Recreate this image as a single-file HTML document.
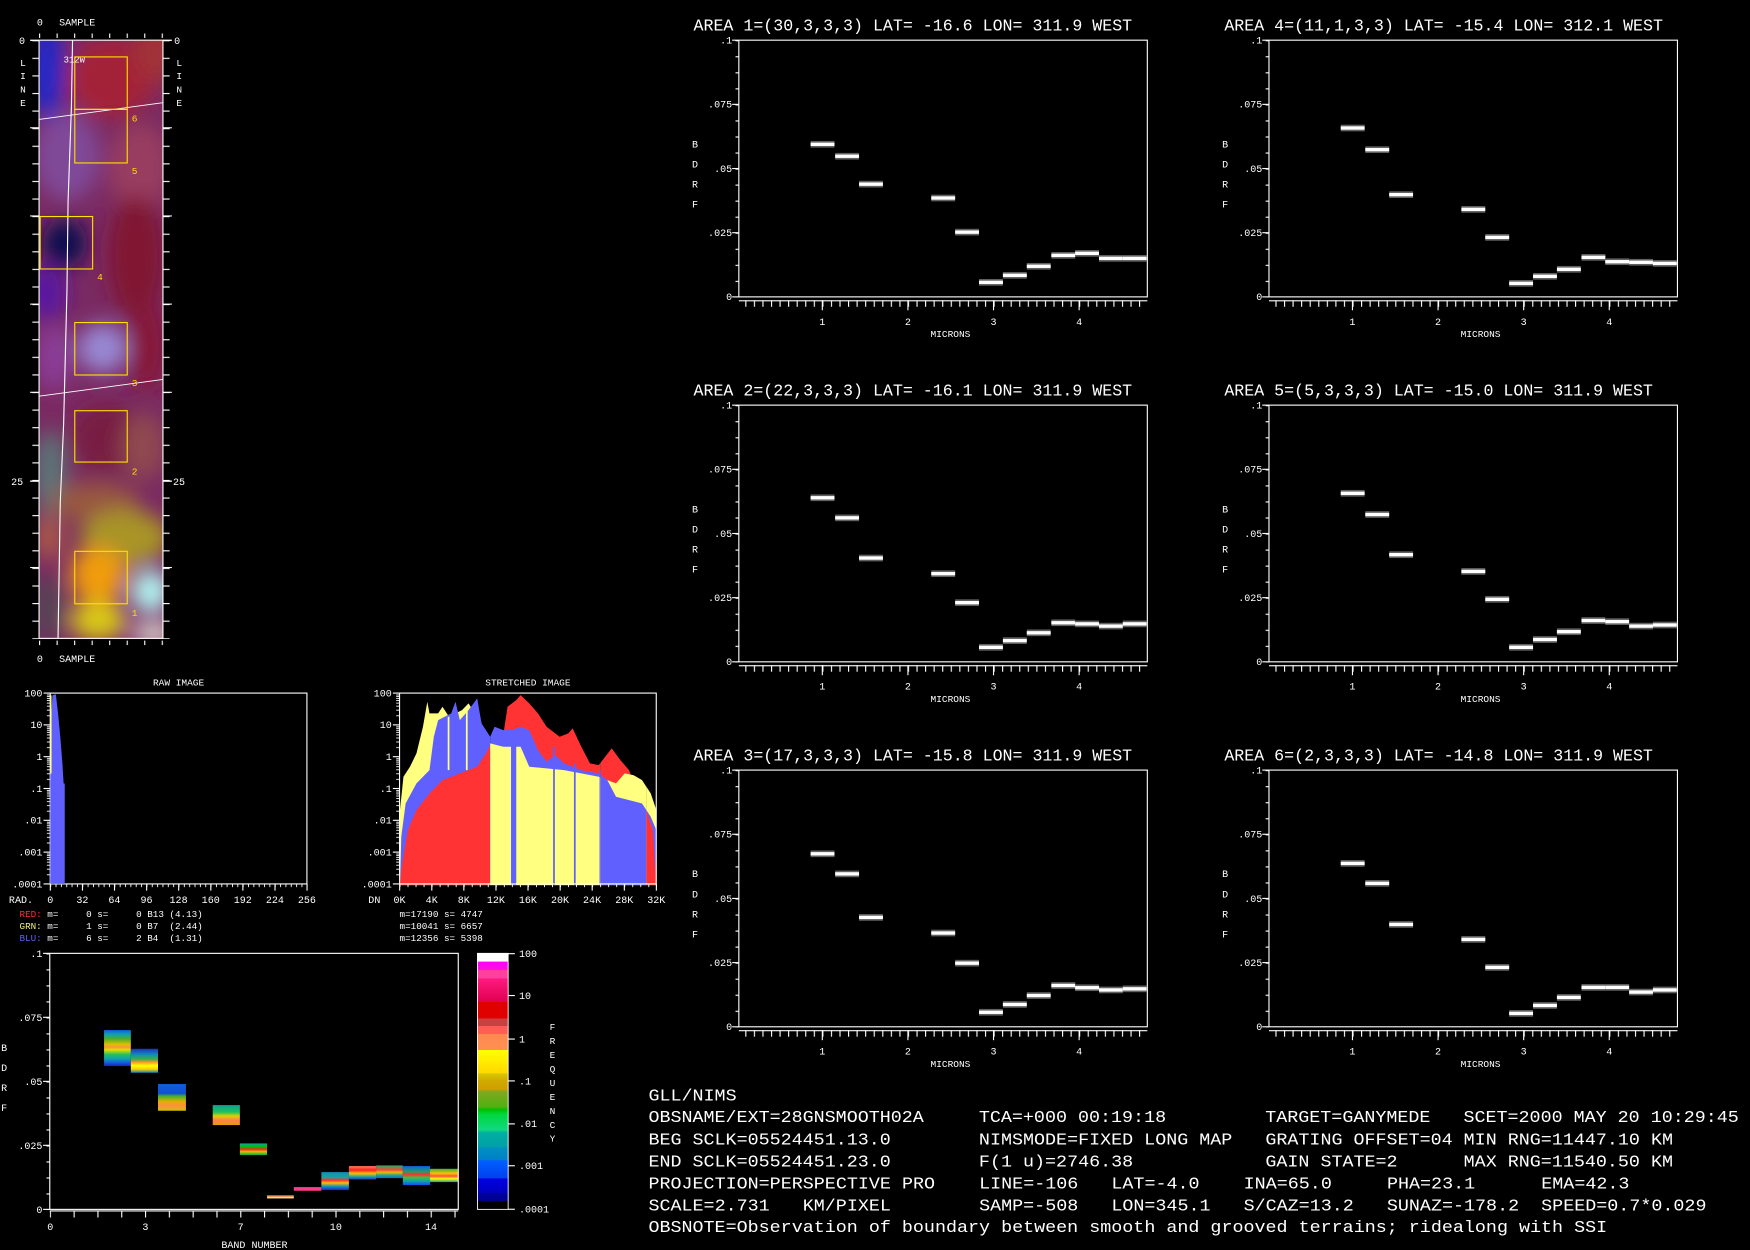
<!DOCTYPE html>
<html><head><meta charset="utf-8">
<style>
html,body{margin:0;padding:0;background:#000;}
svg{display:block;}
text{font-family:"Liberation Mono","DejaVu Sans Mono",monospace;fill:#fff;white-space:pre;}
</style></head>
<body>
<svg xmlns="http://www.w3.org/2000/svg" xmlns:xlink="http://www.w3.org/1999/xlink" width="1750" height="1250" viewBox="0 0 1568 1120">
<defs>
  <filter id="blur" x="-50%" y="-50%" width="200%" height="200%"><feGaussianBlur stdDeviation="9"/></filter>
  <clipPath id="stripClip"><rect x="35" y="36" width="111" height="536"/></clipPath>
  <pattern id="pyt" patternUnits="userSpaceOnUse" x="0" y="0" width="3" height="14.375"><rect x="0" y="0" width="3" height="1" fill="#fff"/></pattern>
  <pattern id="pxt" patternUnits="userSpaceOnUse" x="5.77" y="233" width="7.67" height="8"><rect x="0" y="0" width="1" height="6" fill="#fff"/></pattern>
  <pattern id="pyt2" patternUnits="userSpaceOnUse" x="0" y="854.2" width="3" height="14.34"><rect x="0" y="0" width="3" height="1" fill="#fff"/></pattern>
  <pattern id="pxt2" patternUnits="userSpaceOnUse" x="44.6" y="1085" width="21.33" height="8"><rect x="0" y="0" width="1" height="6" fill="#fff"/></pattern>
  <pattern id="plog" patternUnits="userSpaceOnUse" x="0" y="621" width="3" height="28.5">
    <rect x="0" y="1.3" width="3" height="0.8" fill="#fff"/><rect x="0" y="2.76" width="3" height="0.8" fill="#fff"/>
    <rect x="0" y="4.42" width="3" height="0.8" fill="#fff"/><rect x="0" y="6.32" width="3" height="0.8" fill="#fff"/>
    <rect x="0" y="8.58" width="3" height="0.8" fill="#fff"/><rect x="0" y="11.34" width="3" height="0.8" fill="#fff"/>
    <rect x="0" y="14.9" width="3" height="0.8" fill="#fff"/><rect x="0" y="19.92" width="3" height="0.8" fill="#fff"/>
  </pattern>
  <pattern id="prx" patternUnits="userSpaceOnUse" x="45" y="792" width="4.79" height="6"><rect x="0" y="0" width="0.8" height="3" fill="#fff"/></pattern>
  <pattern id="psx" patternUnits="userSpaceOnUse" x="358" y="792" width="7.19" height="6"><rect x="0" y="0" width="0.8" height="3" fill="#fff"/></pattern>
  <pattern id="pstl" patternUnits="userSpaceOnUse" x="0" y="36" width="8" height="15.76"><rect x="0" y="0" width="8" height="1" fill="#fff"/></pattern>
  <pattern id="pstt" patternUnits="userSpaceOnUse" x="35" y="0" width="15.7" height="8"><rect x="0" y="0" width="1" height="8" fill="#fff"/></pattern>

  <linearGradient id="cbar" x1="0" y1="0" x2="0" y2="1">
    <stop offset="0" stop-color="#fff"/><stop offset="0.032" stop-color="#fff"/>
    <stop offset="0.033" stop-color="#ff00ff"/><stop offset="0.065" stop-color="#ff10e0"/>
    <stop offset="0.066" stop-color="#ff40a0"/><stop offset="0.097" stop-color="#ff40a0"/>
    <stop offset="0.098" stop-color="#ff1a80"/><stop offset="0.19" stop-color="#e00050"/>
    <stop offset="0.191" stop-color="#e00000"/><stop offset="0.254" stop-color="#e00000"/>
    <stop offset="0.255" stop-color="#c84040"/><stop offset="0.283" stop-color="#c84040"/>
    <stop offset="0.284" stop-color="#ff5858"/><stop offset="0.315" stop-color="#ff6050"/>
    <stop offset="0.316" stop-color="#ff8850"/><stop offset="0.377" stop-color="#ff9050"/>
    <stop offset="0.378" stop-color="#ffff00"/><stop offset="0.468" stop-color="#ffd800"/>
    <stop offset="0.469" stop-color="#d8c800"/><stop offset="0.5" stop-color="#d0a800"/>
    <stop offset="0.53" stop-color="#d0a000"/><stop offset="0.54" stop-color="#80a820"/>
    <stop offset="0.6" stop-color="#50b010"/><stop offset="0.61" stop-color="#00c000"/>
    <stop offset="0.63" stop-color="#00d840"/><stop offset="0.69" stop-color="#10d880"/>
    <stop offset="0.7" stop-color="#00b0a0"/><stop offset="0.755" stop-color="#00a0a8"/>
    <stop offset="0.76" stop-color="#0090c0"/><stop offset="0.807" stop-color="#0080c8"/>
    <stop offset="0.81" stop-color="#0060ff"/><stop offset="0.878" stop-color="#0040f0"/>
    <stop offset="0.88" stop-color="#0000e0"/><stop offset="0.935" stop-color="#0000c0"/>
    <stop offset="0.937" stop-color="#0000a0"/><stop offset="0.966" stop-color="#000090"/>
    <stop offset="0.968" stop-color="#000"/><stop offset="1" stop-color="#000"/>
  </linearGradient>
  <linearGradient id="gb1" x1="0" y1="0" x2="0" y2="1">
    <stop offset="0" stop-color="#1060e0"/><stop offset="0.12" stop-color="#10a0b0"/><stop offset="0.25" stop-color="#50b020"/>
    <stop offset="0.4" stop-color="#e0c000"/><stop offset="0.47" stop-color="#ff9040"/><stop offset="0.55" stop-color="#e0e000"/>
    <stop offset="0.68" stop-color="#20c060"/><stop offset="0.8" stop-color="#10a0b0"/><stop offset="0.9" stop-color="#1060e0"/><stop offset="1" stop-color="#2020c0"/>
  </linearGradient>
  <linearGradient id="gb2" x1="0" y1="0" x2="0" y2="1">
    <stop offset="0" stop-color="#2030c0"/><stop offset="0.25" stop-color="#1090b0"/><stop offset="0.45" stop-color="#40b040"/>
    <stop offset="0.55" stop-color="#ff9030"/><stop offset="0.7" stop-color="#ffff00"/><stop offset="0.85" stop-color="#ffd000"/><stop offset="1" stop-color="#1080c0"/>
  </linearGradient>
  <linearGradient id="gb3" x1="0" y1="0" x2="0" y2="1">
    <stop offset="0" stop-color="#1060e0"/><stop offset="0.35" stop-color="#1050d0"/><stop offset="0.45" stop-color="#40b030"/>
    <stop offset="0.65" stop-color="#e0b000"/><stop offset="0.8" stop-color="#ff9040"/><stop offset="1" stop-color="#d0c000"/>
  </linearGradient>
  <linearGradient id="gb4" x1="0" y1="0" x2="0" y2="1">
    <stop offset="0" stop-color="#10a090"/><stop offset="0.35" stop-color="#20c060"/><stop offset="0.55" stop-color="#e0d000"/>
    <stop offset="0.75" stop-color="#ff8050"/><stop offset="1" stop-color="#e0a000"/>
  </linearGradient>
  <linearGradient id="gb5" x1="0" y1="0" x2="0" y2="1">
    <stop offset="0" stop-color="#10a0a0"/><stop offset="0.3" stop-color="#00c000"/><stop offset="0.5" stop-color="#ff2020"/>
    <stop offset="0.7" stop-color="#e0c000"/><stop offset="1" stop-color="#00b040"/>
  </linearGradient>
  <linearGradient id="gb8" x1="0" y1="0" x2="0" y2="1">
    <stop offset="0" stop-color="#1090b0"/><stop offset="0.3" stop-color="#20a0a0"/><stop offset="0.45" stop-color="#ff3030"/>
    <stop offset="0.6" stop-color="#ffc000"/><stop offset="0.8" stop-color="#1090c0"/><stop offset="1" stop-color="#2020d0"/>
  </linearGradient>
  <linearGradient id="gb9" x1="0" y1="0" x2="0" y2="1">
    <stop offset="0" stop-color="#ff8060"/><stop offset="0.3" stop-color="#ff2020"/><stop offset="0.55" stop-color="#ffc000"/>
    <stop offset="0.8" stop-color="#20a0a0"/><stop offset="1" stop-color="#2040d0"/>
  </linearGradient>
  <linearGradient id="gb10" x1="0" y1="0" x2="0" y2="1">
    <stop offset="0" stop-color="#20b060"/><stop offset="0.35" stop-color="#ff4040"/><stop offset="0.55" stop-color="#e0c000"/>
    <stop offset="0.8" stop-color="#10a0a0"/><stop offset="1" stop-color="#1070d0"/>
  </linearGradient>
  <linearGradient id="gb11" x1="0" y1="0" x2="0" y2="1">
    <stop offset="0" stop-color="#1060f0"/><stop offset="0.3" stop-color="#20a060"/><stop offset="0.45" stop-color="#ff3030"/>
    <stop offset="0.6" stop-color="#40c040"/><stop offset="0.8" stop-color="#10a0b0"/><stop offset="1" stop-color="#1050f0"/>
  </linearGradient>
  <linearGradient id="gb12" x1="0" y1="0" x2="0" y2="1">
    <stop offset="0" stop-color="#40b040"/><stop offset="0.35" stop-color="#ffc000"/><stop offset="0.55" stop-color="#ff5040"/>
    <stop offset="0.75" stop-color="#ffff00"/><stop offset="1" stop-color="#10a0b0"/>
  </linearGradient>

  <g id="axes">
    <rect x="0" y="0" width="366" height="230" fill="none" stroke="#fff" stroke-width="1"/>
    <rect x="-3" y="-0.5" width="3" height="231" fill="url(#pyt)"/>
    <rect x="-6" y="-0.5" width="6" height="1" fill="#fff"/>
    <rect x="-6" y="57" width="6" height="1" fill="#fff"/>
    <rect x="-6" y="114.5" width="6" height="1" fill="#fff"/>
    <rect x="-6" y="172" width="6" height="1" fill="#fff"/>
    <rect x="-6" y="229.5" width="6" height="1" fill="#fff"/>
    <rect x="0" y="233" width="366" height="1" fill="#fff"/>
    <rect x="5" y="233" width="361" height="6" fill="url(#pxt)"/>
    <rect x="74.3" y="233" width="1" height="9" fill="#fff"/>
    <rect x="151" y="233" width="1" height="9" fill="#fff"/>
    <rect x="227.7" y="233" width="1" height="9" fill="#fff"/>
    <rect x="304.4" y="233" width="1" height="9" fill="#fff"/>
    <text x="-6" y="3" font-size="9" text-anchor="end">.1</text>
    <text x="-6" y="60.5" font-size="9" text-anchor="end">.075</text>
    <text x="-6" y="118" font-size="9" text-anchor="end">.05</text>
    <text x="-6" y="175.5" font-size="9" text-anchor="end">.025</text>
    <text x="-6" y="233" font-size="9" text-anchor="end">0</text>
    <text x="-42" y="96" font-size="9">B</text>
    <text x="-42" y="114" font-size="9">D</text>
    <text x="-42" y="132" font-size="9">R</text>
    <text x="-42" y="150" font-size="9">F</text>
    <text x="74.8" y="255" font-size="9" text-anchor="middle">1</text>
    <text x="151.5" y="255" font-size="9" text-anchor="middle">2</text>
    <text x="228.2" y="255" font-size="9" text-anchor="middle">3</text>
    <text x="304.9" y="255" font-size="9" text-anchor="middle">4</text>
    <text x="189.6" y="266" font-size="8.5" text-anchor="middle">MICRONS</text>
  </g>
  <g id="b"><rect x="0" y="-3" width="21.4" height="6" fill="#606060"/><rect x="0" y="-1.5" width="21.4" height="3" fill="#fff"/></g>
</defs>

<rect width="1568" height="1120" fill="#000"/>

<!-- STRIP IMAGE -->
<g clip-path="url(#stripClip)">
  <rect x="35" y="36" width="111" height="536" fill="#7a2a62"/>
  <g filter="url(#blur)">
    <ellipse cx="42" cy="62" rx="16" ry="45" fill="#2228c8"/>
    <ellipse cx="100" cy="70" rx="40" ry="35" fill="#a42038"/>
    <ellipse cx="140" cy="45" rx="20" ry="30" fill="#a03038"/>
    <ellipse cx="60" cy="140" rx="30" ry="40" fill="#804898"/>
    <ellipse cx="125" cy="150" rx="28" ry="40" fill="#983e60"/>
    <ellipse cx="58" cy="218" rx="20" ry="22" fill="#0a0a50"/>
    <ellipse cx="42" cy="262" rx="18" ry="25" fill="#5a12a0"/>
    <ellipse cx="122" cy="230" rx="25" ry="55" fill="#801430"/>
    <ellipse cx="92" cy="312" rx="22" ry="22" fill="#9888d4"/>
    <ellipse cx="48" cy="320" rx="16" ry="30" fill="#8a3e98"/>
    <ellipse cx="132" cy="310" rx="16" ry="40" fill="#861238"/>
    <ellipse cx="95" cy="392" rx="30" ry="30" fill="#781c42"/>
    <ellipse cx="45" cy="425" rx="14" ry="40" fill="#5a7878"/>
    <ellipse cx="128" cy="400" rx="20" ry="30" fill="#904850"/>
    <ellipse cx="85" cy="450" rx="40" ry="18" fill="#985840"/>
    <ellipse cx="112" cy="482" rx="40" ry="25" fill="#a89428"/>
    <ellipse cx="44" cy="482" rx="14" ry="20" fill="#a85848"/>
    <ellipse cx="88" cy="515" rx="25" ry="25" fill="#f09c10"/>
    <ellipse cx="44" cy="545" rx="14" ry="30" fill="#544454"/>
    <ellipse cx="88" cy="556" rx="25" ry="18" fill="#d8c818"/>
    <ellipse cx="135" cy="530" rx="18" ry="20" fill="#b0f0ec"/>
    <ellipse cx="138" cy="568" rx="20" ry="10" fill="#dcdcd0"/>
  </g>
  <polyline points="65,36 64,95 61,180 60,260 57,380 54,450 52,572" fill="none" stroke="#fff" stroke-width="1"/>
  <line x1="35" y1="107" x2="146" y2="92" stroke="#fff" stroke-width="0.8"/>
  <line x1="35" y1="355" x2="146" y2="340" stroke="#fff" stroke-width="0.8"/>
</g>
<rect x="35" y="36" width="111" height="536" fill="none" stroke="#fff" stroke-width="1"/>
<text x="57" y="56" font-size="8">312W</text>
<g fill="none" stroke="#ffe000" stroke-width="1">
  <rect x="67" y="51" width="47" height="47"/>
  <rect x="67" y="98" width="47" height="48"/>
  <rect x="36" y="194" width="47" height="47"/>
  <rect x="67" y="289" width="47" height="47"/>
  <rect x="67" y="368" width="47" height="46"/>
  <rect x="67" y="494" width="47" height="47"/>
</g>
<g font-size="8.5">
  <text x="118" y="109" style="fill:#ffe000">6</text>
  <text x="118" y="156" style="fill:#ffe000">5</text>
  <text x="87" y="251" style="fill:#ffe000">4</text>
  <text x="118" y="346" style="fill:#ffe000">3</text>
  <text x="118" y="425" style="fill:#ffe000">2</text>
  <text x="118" y="552" style="fill:#ffe000">1</text>
</g>
<rect x="29" y="35.5" width="6" height="537" fill="url(#pstl)"/>
<rect x="146" y="35.5" width="6" height="537" fill="url(#pstl)"/>
<rect x="34.5" y="30" width="112" height="4" fill="url(#pstt)"/>
<rect x="34.5" y="574" width="112" height="4" fill="url(#pstt)"/>
<rect x="27" y="114" width="8" height="1" fill="#fff"/><rect x="27" y="193" width="8" height="1" fill="#fff"/>
<rect x="27" y="272" width="8" height="1" fill="#fff"/><rect x="27" y="351" width="8" height="1" fill="#fff"/>
<rect x="27" y="508" width="8" height="1" fill="#fff"/>
<rect x="146" y="114" width="8" height="1" fill="#fff"/><rect x="146" y="193" width="8" height="1" fill="#fff"/>
<rect x="146" y="272" width="8" height="1" fill="#fff"/><rect x="146" y="351" width="8" height="1" fill="#fff"/>
<rect x="146" y="508" width="8" height="1" fill="#fff"/>
<rect x="27" y="35.5" width="8" height="1.2" fill="#fff"/><rect x="146" y="35.5" width="8" height="1.2" fill="#fff"/>
<rect x="27" y="430.5" width="8" height="1.2" fill="#fff"/><rect x="146" y="430.5" width="8" height="1.2" fill="#fff"/>
<text x="17" y="39.5" font-size="9">0</text>
<text x="156" y="39.5" font-size="9">0</text>
<text x="10" y="434.5" font-size="9">25</text>
<text x="155" y="434.5" font-size="9">25</text>
<g font-size="8.5"><text x="18" y="59">L</text><text x="18" y="71">I</text><text x="18" y="83">N</text><text x="18" y="95">E</text>
<text x="158" y="59">L</text><text x="158" y="71">I</text><text x="158" y="83">N</text><text x="158" y="95">E</text></g>
<text x="33" y="23" font-size="9">0</text><text x="53" y="23" font-size="9">SAMPLE</text>
<text x="33" y="593" font-size="9">0</text><text x="53" y="593" font-size="9">SAMPLE</text>

<!-- RAW HISTOGRAM -->
<text x="160" y="614" font-size="8.5" text-anchor="middle">RAW IMAGE</text>
<rect x="45" y="621" width="230" height="171" fill="none" stroke="#fff" stroke-width="1"/>
<path d="M45,792 L45,700 L46,640 L47,623 L50,622 L52,639 L54,660 L56,685 L57,702 L58,702 L58,792 Z" fill="#6060ff"/>
<rect x="45" y="623" width="1.2" height="70" fill="#ffff80"/>
<rect x="42" y="621" width="3" height="171" fill="url(#plog)"/>
<g fill="#fff"><rect x="39" y="620.5" width="6" height="1"/><rect x="39" y="649" width="6" height="1"/><rect x="39" y="677.5" width="6" height="1"/><rect x="39" y="706" width="6" height="1"/><rect x="39" y="734.5" width="6" height="1"/><rect x="39" y="763" width="6" height="1"/><rect x="39" y="791.5" width="6" height="1"/></g>
<rect x="44.6" y="792" width="231" height="3" fill="url(#prx)"/>
<g fill="#fff"><rect x="44.6" y="792" width="1" height="6"/><rect x="73.4" y="792" width="1" height="6"/><rect x="102.1" y="792" width="1" height="6"/><rect x="130.9" y="792" width="1" height="6"/><rect x="159.6" y="792" width="1" height="6"/><rect x="188.4" y="792" width="1" height="6"/><rect x="217.1" y="792" width="1" height="6"/><rect x="245.9" y="792" width="1" height="6"/><rect x="274.6" y="792" width="1" height="6"/></g>
<g font-size="9" text-anchor="end"><text x="38" y="624">100</text><text x="38" y="652.5">10</text><text x="38" y="681">1</text><text x="38" y="709.5">.1</text><text x="38" y="738">.01</text><text x="38" y="766.5">.001</text><text x="38" y="795">.0001</text></g>
<text x="8" y="809" font-size="9">RAD.</text>
<g font-size="9" text-anchor="middle"><text x="45" y="809">0</text><text x="73.8" y="809">32</text><text x="102.5" y="809">64</text><text x="131.3" y="809">96</text><text x="160" y="809">128</text><text x="188.8" y="809">160</text><text x="217.5" y="809">192</text><text x="246.3" y="809">224</text><text x="275" y="809">256</text></g>
<g font-size="8.3">
<text x="17.5" y="821.5"><tspan style="fill:#ff3030">RED:</tspan> m=     0 s=     0 B13 (4.13)</text>
<text x="17.5" y="832.3"><tspan style="fill:#f0f080">GRN:</tspan> m=     1 s=     0 B7  (2.44)</text>
<text x="17.5" y="843"><tspan style="fill:#6060ff">BLU:</tspan> m=     6 s=     2 B4  (1.31)</text>
</g>

<!-- STRETCHED HISTOGRAM -->
<text x="473" y="614" font-size="8.5" text-anchor="middle">STRETCHED IMAGE</text>
<defs>
  <path id="hY" d="M922,645 L922,420 L930,320 L945,290 L960,250 L975,170 L985,95 L990,130 L1010,130 L1020,110 L1035,140 L1050,130 L1065,120 L1080,100 L1090,120 L1100,110 L1110,160 L1130,220 L1160,230 L1200,230 L1220,290 L1260,295 L1300,300 L1340,310 L1380,320 L1420,340 L1440,310 L1460,315 L1480,330 L1500,370 L1513,420 L1513,645 Z" fill="#ffff80"/>
  <path id="hB" d="M922,645 L925,500 L935,400 L960,340 L990,300 L1000,200 L1010,150 L1040,130 L1050,95 L1060,150 L1080,120 L1100,85 L1110,160 L1130,200 L1140,170 L1160,180 L1180,180 L1200,170 L1220,180 L1240,240 L1260,275 L1280,255 L1300,280 L1340,300 L1380,310 L1400,330 L1420,380 L1450,390 L1480,400 L1500,440 L1513,480 L1513,645 Z" fill="#6060ff"/>
  <path id="hR" d="M922,645 L925,600 L940,480 L960,420 L990,370 L1020,330 L1060,310 L1100,290 L1120,250 L1140,200 L1160,195 L1170,110 L1190,90 L1200,75 L1220,100 L1240,130 L1260,170 L1290,200 L1310,190 L1320,175 L1340,230 L1360,280 L1380,285 L1410,235 L1430,270 L1450,300 L1470,370 L1490,420 L1505,480 L1513,645 Z" fill="#ff3333"/>
  <clipPath id="cA"><rect x="922" y="0" width="208" height="700"/></clipPath>
  <clipPath id="cB"><rect x="1130" y="0" width="255" height="700"/></clipPath>
  <clipPath id="cC"><rect x="1385" y="0" width="105" height="700"/></clipPath>
  <clipPath id="cD"><rect x="1490" y="0" width="23" height="700"/></clipPath>
</defs>
<g transform="translate(0,600.4) scale(0.3887,0.2987)">
  <g clip-path="url(#cA)"><use xlink:href="#hY"/><use xlink:href="#hB"/><use xlink:href="#hR"/>
    <rect x="1032" y="140" width="4" height="160" fill="#ffff80"/><rect x="1074" y="120" width="4" height="180" fill="#ffff80"/></g>
  <g clip-path="url(#cB)"><use xlink:href="#hR"/><use xlink:href="#hB"/><use xlink:href="#hY"/>
    <rect x="1178" y="200" width="12" height="445" fill="#6060ff"/><rect x="1275" y="230" width="4" height="415" fill="#6060ff"/>
    <rect x="1323" y="280" width="4" height="365" fill="#6060ff"/><rect x="1382" y="300" width="6" height="345" fill="#6060ff"/></g>
  <g clip-path="url(#cC)"><use xlink:href="#hR"/><use xlink:href="#hY"/><use xlink:href="#hB"/></g>
  <g clip-path="url(#cD)"><use xlink:href="#hY"/><use xlink:href="#hB"/><use xlink:href="#hR"/></g>
</g>
<rect x="358" y="621" width="230" height="171" fill="none" stroke="#fff" stroke-width="1"/>
<rect x="355" y="621" width="3" height="171" fill="url(#plog)"/>
<g fill="#fff"><rect x="352" y="620.5" width="6" height="1"/><rect x="352" y="649" width="6" height="1"/><rect x="352" y="677.5" width="6" height="1"/><rect x="352" y="706" width="6" height="1"/><rect x="352" y="734.5" width="6" height="1"/><rect x="352" y="763" width="6" height="1"/><rect x="352" y="791.5" width="6" height="1"/></g>
<rect x="357.6" y="792" width="231" height="3" fill="url(#psx)"/>
<g fill="#fff"><rect x="357.6" y="792" width="1" height="6"/><rect x="386.4" y="792" width="1" height="6"/><rect x="415.1" y="792" width="1" height="6"/><rect x="443.9" y="792" width="1" height="6"/><rect x="472.6" y="792" width="1" height="6"/><rect x="501.4" y="792" width="1" height="6"/><rect x="530.1" y="792" width="1" height="6"/><rect x="558.9" y="792" width="1" height="6"/><rect x="587.6" y="792" width="1" height="6"/></g>
<g font-size="9" text-anchor="end"><text x="351" y="624">100</text><text x="351" y="652.5">10</text><text x="351" y="681">1</text><text x="351" y="709.5">.1</text><text x="351" y="738">.01</text><text x="351" y="766.5">.001</text><text x="351" y="795">.0001</text></g>
<text x="330" y="809" font-size="9">DN</text>
<g font-size="9" text-anchor="middle"><text x="358" y="809">0K</text><text x="386.8" y="809">4K</text><text x="415.5" y="809">8K</text><text x="444.3" y="809">12K</text><text x="473" y="809">16K</text><text x="501.8" y="809">20K</text><text x="530.5" y="809">24K</text><text x="559.3" y="809">28K</text><text x="588" y="809">32K</text></g>
<g font-size="8.3">
<text x="358" y="821.5">m=17190 s= 4747</text>
<text x="358" y="832.3">m=10041 s= 6657</text>
<text x="358" y="843">m=12356 s= 5398</text>
</g>

<!-- BAND PLOT -->
<g transform="translate(0,842.3) scale(0.3428,0.2987)">
  <rect x="272" y="270" width="70" height="108" fill="url(#gb1)"/>
  <rect x="342" y="326" width="71" height="72" fill="url(#gb2)"/>
  <rect x="413" y="432" width="73" height="80" fill="url(#gb3)"/>
  <rect x="556" y="495" width="71" height="60" fill="url(#gb4)"/>
  <rect x="627" y="610" width="71" height="35" fill="url(#gb5)"/>
  <rect x="698" y="765" width="70" height="4" fill="#ff4040"/><rect x="698" y="769" width="70" height="6" fill="#ffe080"/>
  <rect x="768" y="741" width="72" height="11" fill="#ff3c8c"/>
  <rect x="840" y="696" width="72" height="54" fill="url(#gb8)"/>
  <rect x="912" y="678" width="71" height="40" fill="url(#gb9)"/>
  <rect x="983" y="676" width="70" height="38" fill="url(#gb10)"/>
  <rect x="1053" y="678" width="71" height="57" fill="url(#gb11)"/>
  <rect x="1124" y="686" width="74" height="40" fill="url(#gb12)"/>
</g>
<rect x="44.6" y="854.2" width="366" height="229.4" fill="none" stroke="#fff" stroke-width="1"/>
<rect x="41.6" y="853.7" width="3" height="230.5" fill="url(#pyt2)"/>
<g fill="#fff"><rect x="38.6" y="853.7" width="6" height="1"/><rect x="38.6" y="911" width="6" height="1"/><rect x="38.6" y="968.4" width="6" height="1"/><rect x="38.6" y="1025.7" width="6" height="1"/><rect x="38.6" y="1083.1" width="6" height="1"/></g>
<rect x="44.6" y="1085" width="367" height="6" fill="url(#pxt2)"/>
<rect x="44.6" y="1084.5" width="366" height="1" fill="#fff"/>
<g font-size="9" text-anchor="end"><text x="38" y="857.5">.1</text><text x="38" y="914.8">.075</text><text x="38" y="972.2">.05</text><text x="38" y="1029.5">.025</text><text x="38" y="1087">0</text></g>
<g font-size="9"><text x="1" y="941.5">B</text><text x="1" y="959.5">D</text><text x="1" y="977.5">R</text><text x="1" y="995.5">F</text></g>
<g font-size="9" text-anchor="middle"><text x="45" y="1102">0</text><text x="130.3" y="1102">3</text><text x="215.6" y="1102">7</text><text x="300.9" y="1102">10</text><text x="386.2" y="1102">14</text></g>
<text x="228" y="1118" font-size="9" text-anchor="middle">BAND NUMBER</text>
<rect x="427.8" y="854.2" width="27.5" height="229.4" fill="url(#cbar)" stroke="#fff" stroke-width="0.8"/>
<g fill="#fff"><rect x="455.3" y="854" width="6" height="1"/><rect x="455.3" y="891.5" width="6" height="1"/><rect x="455.3" y="930.5" width="6" height="1"/><rect x="455.3" y="968" width="6" height="1"/><rect x="455.3" y="1006.5" width="6" height="1"/><rect x="455.3" y="1044" width="6" height="1"/><rect x="455.3" y="1083" width="6" height="1"/></g>
<g font-size="9"><text x="465" y="857.5">100</text><text x="465" y="895">10</text><text x="465" y="934">1</text><text x="465" y="971.5">.1</text><text x="465" y="1010">.01</text><text x="465" y="1047.5">.001</text><text x="465" y="1086.5">.0001</text></g>
<g font-size="8.5" text-anchor="middle"><text x="495" y="923">F</text><text x="495" y="935.5">R</text><text x="495" y="948">E</text><text x="495" y="960.5">Q</text><text x="495" y="973">U</text><text x="495" y="985.5">E</text><text x="495" y="998">N</text><text x="495" y="1010.5">C</text><text x="495" y="1023">Y</text></g>

<!-- SPECTRAL PLOTS -->
<g transform="translate(662,36)">
  <use xlink:href="#axes"/>
  <text x="-40.6" y="-8.5" font-size="14.5" textLength="393" lengthAdjust="spacingAndGlyphs">AREA 1=(30,3,3,3) LAT= -16.6 LON= 311.9 WEST</text>
  <use xlink:href="#b" x="64.3" y="93.3"/><use xlink:href="#b" x="86.3" y="104"/><use xlink:href="#b" x="107.7" y="129"/>
  <use xlink:href="#b" x="172.4" y="141.4"/><use xlink:href="#b" x="193.8" y="172"/><use xlink:href="#b" x="215.2" y="217"/>
  <use xlink:href="#b" x="236.6" y="210.7"/><use xlink:href="#b" x="258" y="202.6"/><use xlink:href="#b" x="280" y="192.8"/>
  <use xlink:href="#b" x="301.3" y="191"/><use xlink:href="#b" x="322.7" y="195.5"/><use xlink:href="#b" x="344" y="195.5"/>
</g>
<g transform="translate(1137,36)">
  <use xlink:href="#axes"/>
  <text x="-40" y="-8.5" font-size="14.5" textLength="393" lengthAdjust="spacingAndGlyphs">AREA 4=(11,1,3,3) LAT= -15.4 LON= 312.1 WEST</text>
  <use xlink:href="#b" x="64.3" y="78.7"/><use xlink:href="#b" x="86.3" y="98.1"/><use xlink:href="#b" x="107.7" y="138.4"/>
  <use xlink:href="#b" x="172.4" y="151.6"/><use xlink:href="#b" x="193.8" y="176.7"/><use xlink:href="#b" x="215.2" y="217.9"/>
  <use xlink:href="#b" x="236.6" y="211.6"/><use xlink:href="#b" x="258" y="205.3"/><use xlink:href="#b" x="280" y="194.6"/>
  <use xlink:href="#b" x="301.3" y="198.5"/><use xlink:href="#b" x="322.7" y="199"/><use xlink:href="#b" x="344" y="200"/>
</g>
<g transform="translate(662,363)">
  <use xlink:href="#axes"/>
  <text x="-40.6" y="-8.5" font-size="14.5" textLength="393" lengthAdjust="spacingAndGlyphs">AREA 2=(22,3,3,3) LAT= -16.1 LON= 311.9 WEST</text>
  <use xlink:href="#b" x="64.3" y="83"/><use xlink:href="#b" x="86.3" y="101"/><use xlink:href="#b" x="107.7" y="137"/>
  <use xlink:href="#b" x="172.4" y="151"/><use xlink:href="#b" x="193.8" y="177"/><use xlink:href="#b" x="215.2" y="217"/>
  <use xlink:href="#b" x="236.6" y="211"/><use xlink:href="#b" x="258" y="204"/><use xlink:href="#b" x="280" y="195"/>
  <use xlink:href="#b" x="301.3" y="196"/><use xlink:href="#b" x="322.7" y="198"/><use xlink:href="#b" x="344" y="196"/>
</g>
<g transform="translate(1137,363)">
  <use xlink:href="#axes"/>
  <text x="-40" y="-8.5" font-size="14.5" textLength="384" lengthAdjust="spacingAndGlyphs">AREA 5=(5,3,3,3) LAT= -15.0 LON= 311.9 WEST</text>
  <use xlink:href="#b" x="64.3" y="79"/><use xlink:href="#b" x="86.3" y="98"/><use xlink:href="#b" x="107.7" y="134"/>
  <use xlink:href="#b" x="172.4" y="149"/><use xlink:href="#b" x="193.8" y="174"/><use xlink:href="#b" x="215.2" y="217"/>
  <use xlink:href="#b" x="236.6" y="210"/><use xlink:href="#b" x="258" y="203"/><use xlink:href="#b" x="280" y="193"/>
  <use xlink:href="#b" x="301.3" y="194"/><use xlink:href="#b" x="322.7" y="198"/><use xlink:href="#b" x="344" y="197"/>
</g>
<g transform="translate(662,690)">
  <use xlink:href="#axes"/>
  <text x="-40.6" y="-8.5" font-size="14.5" textLength="393" lengthAdjust="spacingAndGlyphs">AREA 3=(17,3,3,3) LAT= -15.8 LON= 311.9 WEST</text>
  <use xlink:href="#b" x="64.3" y="75"/><use xlink:href="#b" x="86.3" y="93"/><use xlink:href="#b" x="107.7" y="132"/>
  <use xlink:href="#b" x="172.4" y="146"/><use xlink:href="#b" x="193.8" y="173"/><use xlink:href="#b" x="215.2" y="217"/>
  <use xlink:href="#b" x="236.6" y="210"/><use xlink:href="#b" x="258" y="202"/><use xlink:href="#b" x="280" y="193"/>
  <use xlink:href="#b" x="301.3" y="195"/><use xlink:href="#b" x="322.7" y="197"/><use xlink:href="#b" x="344" y="196"/>
</g>
<g transform="translate(1137,690)">
  <use xlink:href="#axes"/>
  <text x="-40" y="-8.5" font-size="14.5" textLength="384" lengthAdjust="spacingAndGlyphs">AREA 6=(2,3,3,3) LAT= -14.8 LON= 311.9 WEST</text>
  <use xlink:href="#b" x="64.3" y="83.6"/><use xlink:href="#b" x="86.3" y="101.5"/><use xlink:href="#b" x="107.7" y="138.3"/>
  <use xlink:href="#b" x="172.4" y="151.7"/><use xlink:href="#b" x="193.8" y="176.8"/><use xlink:href="#b" x="215.2" y="218"/>
  <use xlink:href="#b" x="236.6" y="210.9"/><use xlink:href="#b" x="258" y="203.7"/><use xlink:href="#b" x="280" y="194.7"/>
  <use xlink:href="#b" x="301.3" y="194.7"/><use xlink:href="#b" x="322.7" y="198.9"/><use xlink:href="#b" x="344" y="197"/>
</g>

<!-- BOTTOM TEXT -->
<g font-size="14.5">
<text x="581" y="986" textLength="79" lengthAdjust="spacingAndGlyphs">GLL/NIMS</text>
<text x="581" y="1005.5" textLength="977" lengthAdjust="spacingAndGlyphs">OBSNAME/EXT=28GNSMOOTH02A     TCA=+000 00:19:18         TARGET=GANYMEDE   SCET=2000 MAY 20 10:29:45</text>
<text x="581" y="1025.3" textLength="918" lengthAdjust="spacingAndGlyphs">BEG SCLK=05524451.13.0        NIMSMODE=FIXED LONG MAP   GRATING OFFSET=04 MIN RNG=11447.10 KM</text>
<text x="581" y="1045" textLength="918" lengthAdjust="spacingAndGlyphs">END SCLK=05524451.23.0        F(1 u)=2746.38            GAIN STATE=2      MAX RNG=11540.50 KM</text>
<text x="581" y="1064.7" textLength="879" lengthAdjust="spacingAndGlyphs">PROJECTION=PERSPECTIVE PRO    LINE=-106   LAT=-4.0    INA=65.0     PHA=23.1      EMA=42.3</text>
<text x="581" y="1084.5" textLength="948" lengthAdjust="spacingAndGlyphs">SCALE=2.731   KM/PIXEL        SAMP=-508   LON=345.1   S/CAZ=13.2   SUNAZ=-178.2  SPEED=0.7*0.029</text>
<text x="581" y="1104" textLength="859" lengthAdjust="spacingAndGlyphs">OBSNOTE=Observation of boundary between smooth and grooved terrains; ridealong with SSI</text>
</g>
</svg>
</body></html>
